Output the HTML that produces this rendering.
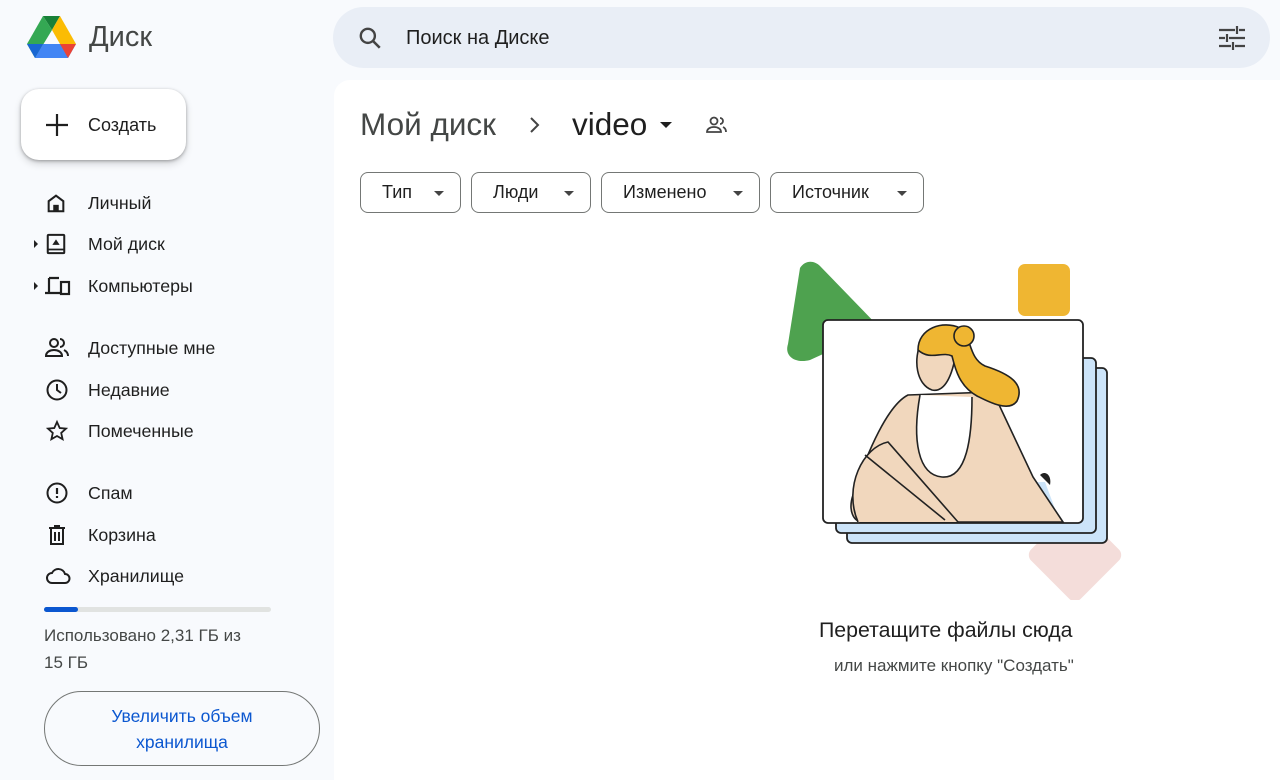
<!DOCTYPE html>
<html><head><meta charset="utf-8"><style>
*{box-sizing:border-box;margin:0;padding:0}
body{width:1280px;height:776px;background:#f8fafd;font-family:"Liberation Sans",sans-serif;color:#1f1f1f;position:relative;overflow:hidden}
.abs{position:absolute}
.nav{position:absolute;left:0;width:330px;height:40px;display:flex;align-items:center;font-size:17.8px;color:#1f1f1f}
.nav svg{position:absolute;left:45px}
.nav span{position:absolute;left:88px}
.chip{position:absolute;top:172px;height:41px;border:1px solid #747775;border-radius:8px;font-size:18px;display:flex;align-items:center;padding-left:21px;color:#1f1f1f}
.chip:after{content:"";position:absolute;right:16px;top:18px;border-left:5px solid transparent;border-right:5px solid transparent;border-top:5px solid #444}
</style></head><body>
<svg class="abs" style="left:27px;top:16px" width="49" height="42" viewBox="0 0 49 42">
<path d="M16 0h17L25 14z" fill="#188038"/>
<path d="M16 0L0 28l8 14 17-28z" fill="#34a853"/>
<path d="M33 0l16 28H33L25 14z" fill="#fbbc04"/>
<path d="M8 42h33l8-14H16z" fill="#4285f4"/>
<path d="M0 28h16l-8 14z" fill="#1967d2"/>
<path d="M49 28H33l8 14z" fill="#ea4335"/>
</svg>
<div class="abs" style="left:89px;top:21px;font-size:29px;color:#444746">Диск</div>
<div class="abs" style="left:333px;top:7px;width:937px;height:61px;background:#e9eef6;border-radius:31px"></div>
<svg class="abs" style="left:357px;top:25px" width="26" height="26" viewBox="0 0 24 24"><circle cx="10" cy="10" r="6.5" fill="none" stroke="#444" stroke-width="2.2"/><path d="M15 15l6 6" stroke="#444" stroke-width="2.4"/></svg>
<div class="abs" style="left:406px;top:27px;font-size:20px;color:#1f1f1f">Поиск на Диске</div>
<svg class="abs" style="left:1218px;top:25px" width="28" height="26" viewBox="0 0 28 26" stroke="#444" stroke-width="2.2"><path d="M1 5h16M21 5h6M19 1v8M1 13h6M11 13h16M9 9v8M1 21h12M17 21h10M15 17v8"/></svg>
<div class="abs" style="left:21px;top:89px;width:165px;height:71px;background:#fff;border-radius:18px;box-shadow:0 1px 3px rgba(0,0,0,.3),0 4px 8px rgba(0,0,0,.15)"></div>
<svg class="abs" style="left:46px;top:114px" width="22" height="22"><path d="M11 0v22M0 11h22" stroke="#1f1f1f" stroke-width="2.2"/></svg>
<div class="abs" style="left:88px;top:115px;font-size:18px">Создать</div>

<div class="nav" style="top:183px"><svg width="22" height="22" viewBox="0 0 24 24"><path d="M4 21V10l8-6 8 6v11z" fill="none" stroke="#1f1f1f" stroke-width="2.2"/><rect x="9" y="14" width="6" height="7" fill="#1f1f1f"/></svg><span>Личный</span></div>
<div class="nav" style="top:224px"><div class="abs" style="left:34px;top:16px;border-top:4px solid transparent;border-bottom:4px solid transparent;border-left:4px solid #222"></div><svg width="22" height="22" viewBox="0 0 24 24"><rect x="3" y="2" width="18" height="20" rx="1" fill="none" stroke="#1f1f1f" stroke-width="2.2"/><path d="M8 13l4-6 4 6z" fill="#1f1f1f"/><path d="M3 18h18" stroke="#1f1f1f" stroke-width="2"/></svg><span>Мой диск</span></div>
<div class="nav" style="top:266px"><div class="abs" style="left:34px;top:16px;border-top:4px solid transparent;border-bottom:4px solid transparent;border-left:4px solid #222"></div><svg width="26" height="22" viewBox="0 0 26 22"><path d="M4 3h10M4 3v14M0 18h15" fill="none" stroke="#1f1f1f" stroke-width="2.2"/><rect x="16" y="7" width="8" height="12" fill="none" stroke="#1f1f1f" stroke-width="2.2"/></svg><span>Компьютеры</span></div>
<div class="nav" style="top:328px"><svg width="24" height="22" viewBox="0 0 24 22"><circle cx="9" cy="6" r="4" fill="none" stroke="#1f1f1f" stroke-width="2"/><path d="M1 19c0-4 4-6 8-6s8 2 8 6z" fill="none" stroke="#1f1f1f" stroke-width="2"/><path d="M15 2a4 4 0 010 8M19 13c2 1 4 3 4 6" fill="none" stroke="#1f1f1f" stroke-width="2"/></svg><span>Доступные мне</span></div>
<div class="nav" style="top:370px"><svg width="24" height="24" viewBox="0 0 24 24"><circle cx="12" cy="12" r="9.5" fill="none" stroke="#1f1f1f" stroke-width="2"/><path d="M12 6v6l4 3" fill="none" stroke="#1f1f1f" stroke-width="2"/></svg><span>Недавние</span></div>
<div class="nav" style="top:411px"><svg width="24" height="24" viewBox="0 0 24 24"><path d="M12 3l2.7 6 6.3.6-4.8 4.3 1.4 6.3L12 17l-5.6 3.2 1.4-6.3L3 9.6 9.3 9z" fill="none" stroke="#1f1f1f" stroke-width="1.8"/></svg><span>Помеченные</span></div>
<div class="nav" style="top:473px"><svg width="24" height="24" viewBox="0 0 24 24"><circle cx="12" cy="12" r="9.5" fill="none" stroke="#1f1f1f" stroke-width="2"/><path d="M12 7v6M12 15v2" stroke="#1f1f1f" stroke-width="2.2"/></svg><span>Спам</span></div>
<div class="nav" style="top:515px"><svg width="24" height="24" viewBox="0 0 24 24"><path d="M4 5h16M9 3h6M6 5v16h12V5M10 9v9M14 9v9" fill="none" stroke="#1f1f1f" stroke-width="2"/></svg><span>Корзина</span></div>
<div class="nav" style="top:556px"><svg width="26" height="22" viewBox="0 0 26 22"><path d="M7 18a5 5 0 010-10 7 7 0 0113 1 4.5 4.5 0 010 9z" fill="none" stroke="#1f1f1f" stroke-width="2"/></svg><span>Хранилище</span></div>
<div class="abs" style="left:44px;top:607px;width:227px;height:5px;background:#e1e3e1;border-radius:3px"><div style="width:34px;height:5px;background:#0b57d0;border-radius:3px"></div></div>
<div class="abs" style="left:44px;top:622px;font-size:17px;line-height:27px;color:#444746">Использовано 2,31 ГБ из<br>15 ГБ</div>
<div class="abs" style="left:44px;top:691px;width:276px;height:75px;border:1px solid #747775;border-radius:38px;text-align:center;font-size:17.5px;line-height:26px;color:#0b57d0;padding-top:11px">Увеличить объем<br>хранилища</div>

<div class="abs" style="left:334px;top:80px;width:946px;height:700px;background:#fff;border-radius:16px 0 0 0"></div>
<div class="abs" style="left:360px;top:106px;font-size:31.5px;color:#444746">Мой диск</div>
<svg class="abs" style="left:528px;top:116px" width="14" height="18"><path d="M3 2l7 7-7 7" fill="none" stroke="#444" stroke-width="2"/></svg>
<div class="abs" style="left:572px;top:106px;font-size:31.5px;color:#1f1f1f">video</div>
<div class="abs" style="left:660px;top:122px;border-left:6px solid transparent;border-right:6px solid transparent;border-top:6px solid #1f1f1f"></div>
<svg class="abs" style="left:705px;top:115px" width="24" height="20" viewBox="0 0 24 20"><circle cx="9" cy="6" r="3.5" fill="none" stroke="#444" stroke-width="1.8"/><path d="M2 17c0-3 3-5 7-5s7 2 7 5z" fill="none" stroke="#444" stroke-width="1.8"/><path d="M15 3a3 3 0 010 6M18 12c2 1 3 3 3 5" fill="none" stroke="#444" stroke-width="1.8"/></svg>
<div class="chip" style="left:360px;width:101px">Тип</div>
<div class="chip" style="left:471px;width:120px">Люди</div>
<div class="chip" style="left:601px;width:159px">Изменено</div>
<div class="chip" style="left:770px;width:154px">Источник</div>

<svg class="abs" style="left:770px;top:250px" width="380" height="350" viewBox="0 0 380 350">
<path d="M30 18c5-8 14-8 20-2l60 62L40 110c-15 4-26-4-22-16z" fill="#4ea24f"/>
<rect x="248" y="14" width="52" height="52" rx="7" fill="#efb632"/>
<rect x="270" y="270" width="70" height="70" rx="8" transform="rotate(45 305 305)" fill="#f4ddda"/>
<rect x="77" y="118" width="260" height="175" rx="5" fill="#cce4f9" stroke="#222" stroke-width="1.8"/>
<rect x="66" y="108" width="260" height="175" rx="5" fill="#cce4f9" stroke="#222" stroke-width="1.8"/>
<rect x="53" y="70" width="260" height="203" rx="5" fill="#fff" stroke="#222" stroke-width="1.8"/>
<path d="M175 272c10-25 60-40 100-40l15 40z" fill="#cce4f9"/>
<path d="M270 225c5-5 12 0 10 10z" fill="#222"/>
<path d="M138 145c-20 10-40 55-55 100-5 15 0 27 10 27h200l-30-45-40-85z" fill="#f1d7bd" stroke="#222" stroke-width="1.6"/>
<path d="M150 145c-8 45-2 80 22 82 25 2 30-40 30-80" fill="#fff" stroke="#222" stroke-width="1.6"/>
<path d="M152 90c-10 20-5 45 10 50 14 3 22-18 25-45z" fill="#f1d7bd" stroke="#222" stroke-width="1.6"/>
<path d="M148 100c0-22 25-30 42-22 12 8 8 30 25 38 25 8 40 18 32 35-8 12-30 0-40-5-18-10-22-28-25-40-10-5-22 5-34-6z" fill="#efb632" stroke="#222" stroke-width="1.6"/>
<circle cx="194" cy="86" r="10" fill="#efb632" stroke="#222" stroke-width="1.6"/>
<path d="M88 272c-15-35 5-75 30-80l70 80M95 205l80 65" fill="#f1d7bd" stroke="#222" stroke-width="1.6"/>
</svg>
<div class="abs" style="left:819px;top:618px;font-size:21.3px;color:#1f1f1f">Перетащите файлы сюда</div>
<div class="abs" style="left:834px;top:656px;font-size:17px;color:#444746">или нажмите кнопку "Создать"</div>
</body></html>
